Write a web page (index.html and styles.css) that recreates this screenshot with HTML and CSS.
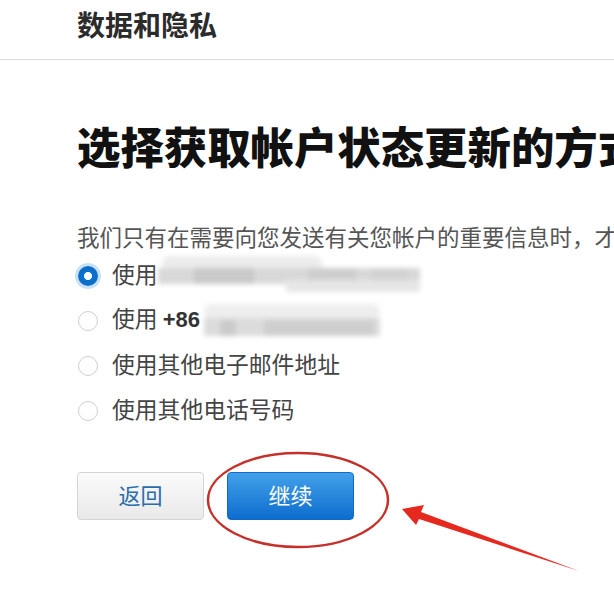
FILE: index.html
```html
<!DOCTYPE html>
<html lang="zh-CN">
<head>
<meta charset="utf-8">
<title>数据和隐私</title>
<link rel="stylesheet" href="styles.css">
</head>
<body>
<header class="topbar">
  <h1 class="topbar-title">数据和隐私</h1>
</header>
<main class="content">
  <h2 class="heading">选择获取帐户状态更新的方式</h2>
  <p class="subtitle">我们只有在需要向您发送有关您帐户的重要信息时，才会联系您。</p>
  <ul class="options">
    <li class="option">
      <span class="radio radio-on"></span>
      <span class="label">使用</span>
      <span class="blur blur-a">
        <span class="b b1"></span><span class="b b2"></span><span class="b b3"></span><span class="b b4"></span><span class="b b5"></span><span class="b b6"></span>
      </span>
    </li>
    <li class="option">
      <span class="radio"></span>
      <span class="label">使用 <span class="num">+86</span></span>
      <span class="blur blur-b">
        <span class="b c1"></span><span class="b c2"></span><span class="b c3"></span><span class="b c4"></span>
      </span>
    </li>
    <li class="option">
      <span class="radio"></span>
      <span class="label">使用其他电子邮件地址</span>
    </li>
    <li class="option">
      <span class="radio"></span>
      <span class="label">使用其他电话号码</span>
    </li>
  </ul>
  <div class="actions">
    <button class="btn btn-back">返回</button>
    <button class="btn btn-next">继续</button>
  </div>
</main>
<svg class="annotation" width="614" height="605" viewBox="0 0 614 605">
  <ellipse cx="298" cy="500" rx="90" ry="47" fill="none" stroke="#c5302a" stroke-width="2.5"/>
  <polygon points="402,509 424,505 421,512 579,571 419,519 416,525" fill="#e5291f"/>
</svg>
</body>
</html>
```
FILE: styles.css
```css
html, body {
  margin: 0;
  padding: 0;
  background: #ffffff;
  width: 614px;
  height: 605px;
  overflow: hidden;
}
body {
  position: relative;
  font-family: "Noto Sans CJK SC", "Noto Sans", sans-serif;
  color: #333;
}
.topbar {
  height: 59px;
  border-bottom: 1px solid #dcdcdc;
  padding-left: 77px;
  box-sizing: content-box;
}
.topbar-title {
  margin: 0;
  padding-top: 6px;
  font-size: 28px;
  line-height: 36px;
  font-weight: 700;
  color: #2b2b2b;
}
.content {
  padding: 60px 0 0 77px;
}
.heading {
  margin: 0;
  font-size: 43.4px;
  line-height: 50px;
  font-weight: 900;
  color: #111;
  white-space: nowrap;
}
.subtitle {
  margin: 51px 0 0;
  font-size: 22.5px;
  line-height: 30px;
  color: #555;
  white-space: nowrap;
}
.options {
  list-style: none;
  margin: 2px 0 0;
  padding: 0;
}
.option {
  height: 45px;
  display: flex;
  align-items: center;
  padding-left: 1px;
}
.radio {
  width: 18px;
  height: 18px;
  border: 1px solid #cfcfcf;
  border-radius: 50%;
  background: #fff;
  flex: none;
  box-sizing: content-box;
}
.radio-on {
  width: 20px;
  height: 20px;
  border: none;
  background: radial-gradient(circle, #fff 0 3.6px, #0b6fc9 4.4px);
  box-shadow: 0 0 0 3px #c8e1f7;
}
.label {
  margin-left: 14px;
  font-size: 22.8px;
  line-height: 30px;
  color: #444;
  white-space: nowrap;
  position: relative;
  top: -2px;
}
.num {
  font-family: "Liberation Sans", Arial, sans-serif;
  font-weight: 700;
  font-size: 22px;
  color: #333;
}
.blur {
  position: relative;
  display: inline-block;
  filter: blur(2.5px);
  flex: none;
}
.blur-a {
  width: 262px;
  height: 36px;
  margin-top: -4px;
}
.blur-b {
  width: 176px;
  height: 34px;
  margin-left: 4px;
  margin-top: 0;
}
.b {
  position: absolute;
  display: block;
}
.b1 { left: 4px; top: 0; width: 160px; height: 16px; background: #ececec; border-radius: 8px; }
.b2 { left: 0; top: 12px; width: 262px; height: 16px; background: #d8d8d8; }
.b3 { left: 36px; top: 12px; width: 60px; height: 16px; background: #c9c9c9; }
.b4 { left: 150px; top: 12px; width: 48px; height: 14px; background: #cdcdcd; }
.b5 { left: 128px; top: 24px; width: 134px; height: 12px; background: #e6e6e6; }
.b6 { left: 214px; top: 12px; width: 36px; height: 12px; background: #d2d2d2; }
.c1 { left: 0; top: 0; width: 176px; height: 16px; background: #eeeeee; border-radius: 8px; }
.c2 { left: 0; top: 14px; width: 176px; height: 18px; background: #dcdcdc; }
.c3 { left: 16px; top: 16px; width: 16px; height: 16px; background: #cbcbcb; }
.c4 { left: 60px; top: 16px; width: 110px; height: 16px; background: #cfcfcf; }
.actions {
  display: flex;
  gap: 23px;
  margin-top: 39px;
}
.btn {
  width: 127px;
  height: 48px;
  border-radius: 4px;
  font-family: "Noto Sans CJK SC", sans-serif;
  font-size: 22px;
  line-height: 1;
  padding: 0 0 4px;
  cursor: pointer;
}
.btn-back {
  background: linear-gradient(#fbfbfb, #e9e9e9);
  border: 1px solid #d4d4d4;
  color: #2a6eaa;
}
.btn-next {
  background: linear-gradient(#43a0ea, #0d6dce);
  border: 1px solid #0f6cc4;
  color: #ffffff;
}
.annotation {
  position: absolute;
  top: 0;
  left: 0;
  pointer-events: none;
}
```
